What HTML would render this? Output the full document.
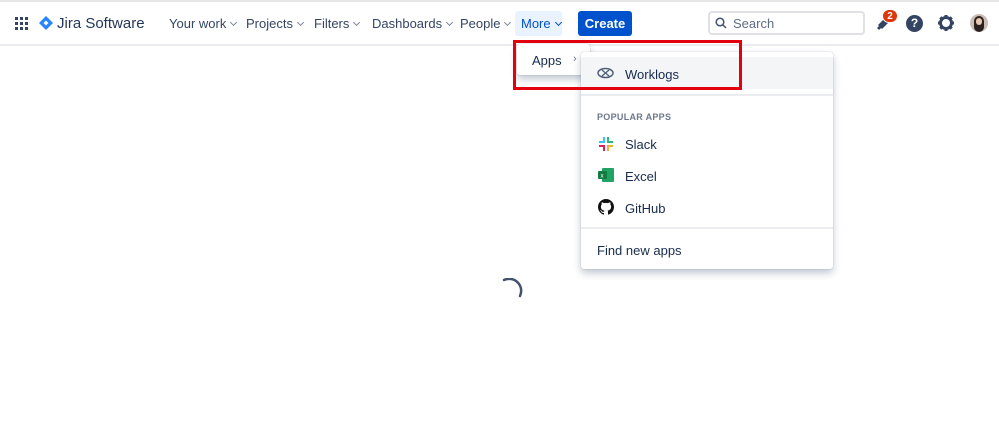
<!DOCTYPE html>
<html><head><meta charset="utf-8"><style>
*{box-sizing:border-box;margin:0;padding:0}
body{width:999px;height:433px;background:#fff;font-family:"Liberation Sans",sans-serif;color:#42526e;position:relative;overflow:hidden;font-size:13px}
.top{position:absolute;left:0;top:0;width:999px;height:2px;background:#e6e6e6}
.hdr{position:absolute;left:0;top:0;width:999px;height:46px;border-bottom:2px solid #ebecf0;background:#fff}
.a{position:absolute;top:16px;font-size:13px;color:#344563}
.chev{display:inline-block;width:5px;height:5px;border-right:1.3px solid #7a869a;border-bottom:1.3px solid #7a869a;transform:rotate(45deg);margin-left:5px;position:relative;top:-3px}
.dd{position:absolute;background:#fff;border-radius:3px;box-shadow:0 4px 8px rgba(9,30,66,.25),0 0 1px rgba(9,30,66,.31)}
.it{position:absolute;left:0;width:100%;font-size:13px;color:#172b4d}
</style></head><body>
<div class="hdr"></div><div class="top"></div>
<svg style="position:absolute;left:15px;top:17px" width="13" height="13" viewBox="0 0 13 13" fill="#344563">
<rect x="0" y="0" width="3" height="3"/><rect x="5" y="0" width="3" height="3"/><rect x="10" y="0" width="3" height="3"/>
<rect x="0" y="5" width="3" height="3"/><rect x="5" y="5" width="3" height="3"/><rect x="10" y="5" width="3" height="3"/>
<rect x="0" y="10" width="3" height="3"/><rect x="5" y="10" width="3" height="3"/><rect x="10" y="10" width="3" height="3"/></svg>
<svg style="position:absolute;left:39px;top:16px" width="14" height="14" viewBox="0 0 14 14"><path d="M7 0L14 7L7 14L0 7Z" fill="#2684ff"/><path d="M7 4.5L9.5 7L7 9.5L4.5 7Z" fill="#fff"/></svg>
<div style="position:absolute;left:57px;top:15px;font-size:15px;color:#253858">Jira Software</div>
<div class="a" style="left:169px">Your work<span class="chev"></span></div>
<div class="a" style="left:246px">Projects<span class="chev"></span></div>
<div class="a" style="left:314px">Filters<span class="chev"></span></div>
<div class="a" style="left:372px">Dashboards<span class="chev"></span></div>
<div class="a" style="left:460px">People<span class="chev"></span></div>
<div style="position:absolute;left:515px;top:11px;width:47px;height:25px;background:#e9f2ff;border-radius:3px"></div>
<div class="a" style="left:521px;color:#0052cc">More<span class="chev" style="border-color:#0052cc"></span></div>
<div style="position:absolute;left:578px;top:11px;width:54px;height:25px;background:#0052cc;border-radius:3px;color:#fff;font-weight:bold;font-size:13px;text-align:center;line-height:25px">Create</div>
<div style="position:absolute;left:708px;top:11px;width:157px;height:24px;border:2px solid #dfe1e6;border-radius:4px;background:#fff"></div>
<svg style="position:absolute;left:715px;top:17px" width="12" height="12" viewBox="0 0 12 12"><circle cx="5" cy="5" r="3.8" fill="none" stroke="#42526e" stroke-width="1.5"/><path d="M8 8L11 11" stroke="#42526e" stroke-width="1.5"/></svg>
<div style="position:absolute;left:733px;top:16px;color:#5e6c84;font-size:13px">Search</div>
<svg style="position:absolute;left:876px;top:15px" width="16" height="16" viewBox="0 0 16 16"><path d="M2 10L9 3L13 7L6 14Z M3 11L1 13L3 15L5 13Z" fill="#344563"/></svg>
<div style="position:absolute;left:882px;top:9px;width:16px;height:14px;border-radius:7px;background:#de350b;color:#fff;font-size:10px;font-weight:bold;text-align:center;line-height:14px;border:1px solid #fff">2</div>
<div style="position:absolute;left:906px;top:15px;width:17px;height:17px;border-radius:50%;background:#344563;color:#fff;font-weight:bold;font-size:12px;text-align:center;line-height:17px">?</div>
<svg style="position:absolute;left:937px;top:14px" width="18" height="18" viewBox="0 0 18 18"><circle cx="9" cy="9" r="5.5" fill="none" stroke="#344563" stroke-width="3"/><g stroke="#344563" stroke-width="3"><path d="M9 1V4M9 14V17M1 9H4M14 9H17M3.3 3.3L5.4 5.4M12.6 12.6L14.7 14.7M3.3 14.7L5.4 12.6M12.6 5.4L14.7 3.3"/></g></svg>
<div style="position:absolute;left:970px;top:14px;width:18px;height:18px;border-radius:50%;background:#c9bdb6;overflow:hidden"><div style="position:absolute;left:4px;top:2px;width:10px;height:16px;border-radius:5px;background:#2a2220"></div><div style="position:absolute;left:6px;top:4px;width:6px;height:7px;border-radius:3px;background:#e8c6b0"></div></div>

<div class="dd" style="left:517px;top:44px;width:73px;height:31px"></div>
<div style="position:absolute;left:532px;top:53px;font-size:13px;color:#172b4d">Apps</div>
<div style="position:absolute;left:573px;top:53px;font-size:11px;color:#6b778c">›</div>
<div class="dd" style="left:581px;top:52px;width:252px;height:217px">
<div style="position:absolute;left:0;top:5px;width:252px;height:32px;background:#f4f5f7"></div>
<svg style="position:absolute;left:16px;top:15px" width="17" height="12" viewBox="0 0 17 12"><ellipse cx="8.5" cy="6" rx="7.5" ry="4.5" fill="none" stroke="#505f79" stroke-width="1.5"/><path d="M5 3L12 9M12 3L5 9" stroke="#505f79" stroke-width="1.3"/></svg>
<div class="it" style="left:44px;top:15px">Worklogs</div>
<div style="position:absolute;left:0;top:42px;width:252px;height:2px;background:#ebecf0"></div>
<div style="position:absolute;left:16px;top:60px;font-size:9px;font-weight:bold;color:#6b778c;letter-spacing:.3px">POPULAR APPS</div>
<svg style="position:absolute;left:18px;top:85px" width="14" height="14" viewBox="0 0 14 14"><rect x="0" y="4" width="6" height="2" fill="#36c5f0"/><rect x="4" y="0" width="2" height="6" fill="#36c5f0"/><rect x="8" y="0" width="2" height="6" fill="#2eb67d"/><rect x="8" y="4" width="6" height="2" fill="#2eb67d"/><rect x="8" y="8" width="6" height="2" fill="#ecb22e"/><rect x="8" y="8" width="2" height="6" fill="#ecb22e"/><rect x="4" y="8" width="2" height="6" fill="#e01e5a"/><rect x="0" y="8" width="6" height="2" fill="#e01e5a"/></svg>
<div class="it" style="left:44px;top:85px">Slack</div>
<svg style="position:absolute;left:17px;top:116px" width="16" height="14" viewBox="0 0 16 14"><rect x="4" y="0" width="12" height="14" rx="1" fill="#21a366"/><rect x="0" y="3" width="9" height="8" rx="1" fill="#107c41"/><text x="2.5" y="9.5" font-size="6" fill="#fff" font-family="Liberation Sans">x</text></svg>
<div class="it" style="left:44px;top:117px">Excel</div>
<svg style="position:absolute;left:17px;top:147px" width="16" height="16" viewBox="0 0 16 16"><path fill="#111" d="M8 0C3.58 0 0 3.580 0 8c0 3.54 2.29 6.53 5.47 7.59.4.07.55-.17.55-.38v-1.33c-2.230.48-2.7-1.07-2.7-1.07-.36-.92-.89-1.17-.89-1.17-.73-.5.06-.49.06-.49.8.06 1.23.83 1.23.83.72 1.23 1.87.87 2.33.67.07-.52.28-.87.51-1.07-1.78-.2-3.64-.89-3.64-3.95 0-.87.31-1.59.82-2.15-.08-.2-.36-1.020.08-2.12 0 0 .67-.21 2.2.82.64-.18 1.32-.27 2-.27.68 0 1.36.09 2 .27 1.53-1.04 2.2-.82 2.2-.82.44 1.1.16 1.92.08 2.12.51.56.82 1.27.82 2.15 0 3.07-1.87 3.75-3.65 3.95.29.25.54.73.54 1.48v2.2c0 .21.15.46.55.38A8.013 8.013 0 0016 8c0-4.42-3.58-8-8-8z"/></svg>
<div class="it" style="left:44px;top:149px">GitHub</div>
<div style="position:absolute;left:0;top:175px;width:252px;height:2px;background:#ebecf0"></div>
<div class="it" style="left:16px;top:191px">Find new apps</div>
</div>
<div style="position:absolute;left:513px;top:40px;width:229px;height:50px;border:3.5px solid #e3000f"></div>
<svg style="position:absolute;left:496px;top:278px" width="28" height="28" viewBox="0 0 28 28"><path d="M8 2A12 12 0 0 1 24 18" fill="none" stroke="#42526e" stroke-width="2.5" stroke-linecap="round"/></svg>
</body></html>
